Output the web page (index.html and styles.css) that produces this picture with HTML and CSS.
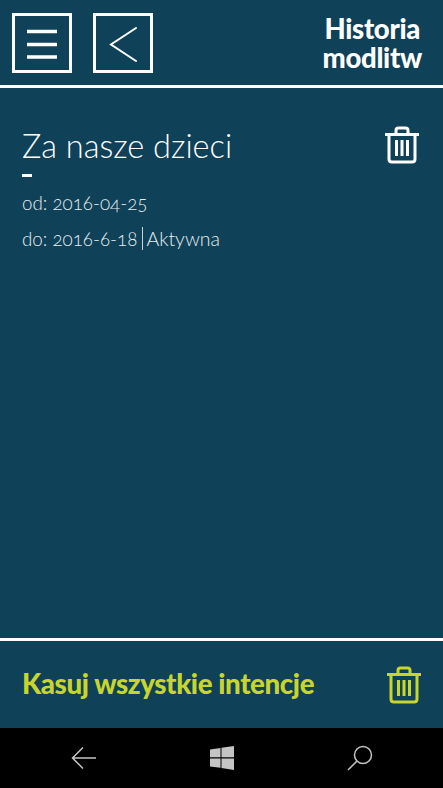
FILE: index.html
```html
<!DOCTYPE html>
<html lang="pl">
<head>
  <meta charset="UTF-8">
  <title>Historia modlitw</title>
  <link rel="stylesheet" href="styles.css">
</head>
<body>
  <div class="app">
    <header class="top-bar">
      <button class="square-btn">
        <svg width="54" height="54" viewBox="0 0 54 54"><path d="M12 15.500h30M12 28.500h30M12 41h30" stroke="#fff" stroke-width="3.500" fill="none"/></svg>
      </button>
      <button class="square-btn">
        <svg width="54" height="54" viewBox="0 0 54 54"><path d="M40 12 L15 28.500 L40 45" stroke="#fff" stroke-width="2" stroke-linecap="round" fill="none"/></svg>
      </button>
      <h1 class="page-title">Historia<br>modlitw</h1>
    </header>

    <main class="list">
      <div class="intention">
        <div class="intention-info">
          <h2 class="intention-name">Za nasze dzieci</h2>
          <div class="dash"></div>
          <p class="date-line">od: 2016-04-25</p>
          <p class="date-line">do: 2016-6-18 <span class="status">Aktywna</span></p>
        </div>
        <svg class="trash" width="36" height="38" viewBox="0 0 36 38" fill="none" stroke="#fff" stroke-width="3">
          <path d="M1 8.500h34M12 8V4.500q0-2.500 2.500-2.500h7q2.500 0 2.500 2.500V8M5 8.500V33q0 3 3 3h20q3 0 3-3V8.500M12.500 14v16M18 14v16M23.500 14v16"/>
        </svg>
      </div>
    </main>

    <footer class="bottom-bar">
      <span class="clear-all">Kasuj wszystkie intencje</span>
      <svg class="trash" width="36" height="38" viewBox="0 0 36 38" fill="none" stroke="#c8d62b" stroke-width="3">
        <path d="M1 8.500h34M12 8V4.500q0-2.500 2.500-2.500h7q2.500 0 2.500 2.500V8M5 8.500V33q0 3 3 3h20q3 0 3-3V8.500M12.500 14v16M18 14v16M23.500 14v16"/>
      </svg>
    </footer>

    <nav class="phone-nav">
      <svg width="26" height="24" viewBox="0 0 26 24" fill="none" stroke="#c4c4c4" stroke-width="1.500"><path d="M25 12H2M12 1.500 1.500 12 12 22.500"/></svg>
      <svg width="24" height="24" viewBox="0 0 24 24" fill="#c4c4c4"><path d="M0 3.500 10.500 2v9.200H0zM11.500 1.800 24 0v11.200H11.500zM0 12.400h10.500v9.400L0 20.400zM11.500 12.400H24V24l-12.500-1.900z"/></svg>
      <svg width="26" height="26" viewBox="0 0 26 26" fill="none" stroke="#c4c4c4" stroke-width="1.500"><circle cx="16" cy="10" r="8.500"/><path d="M10 16 1 25"/></svg>
    </nav>
  </div>
</body>
</html>
```
FILE: styles.css
```css
body {
    margin: 0;
    background-color: #0f4158;
    font-family: Lato, "Open Sans", sans-serif;
    color: white;
}

.app {
    display: flex;
    flex-direction: column;
    height: 788px;
    overflow: hidden;
}

.top-bar {
    display: flex;
    align-items: center;
    gap: 21px;
    height: 85px;
    padding: 0 21px 0 12px;
    border-bottom: 3px solid white;
    flex-shrink: 0;
}
.square-btn {
    width: 60px;
    height: 60px;
    padding: 0;
    border: 3px solid white;
    background: none;
}
.square-btn svg {
    display: block;
}
.page-title {
    margin: 0 0 0 auto;
    font-size: 27.500px;
    line-height: 29px;
    font-weight: 900;
    letter-spacing: -0.3px;
    text-align: center;
}

.list {
    flex: 1;
    padding: 37px 23px 0 22px;
}
.intention {
    display: flex;
    justify-content: space-between;
    align-items: flex-start;
    padding-top: 1px;
}
.intention-name {
    margin: 0;
    font-size: 32.500px;
    line-height: 40px;
    font-weight: 300;
}
.dash {
    width: 10px;
    height: 3px;
    margin: 8px 0 13px;
    background-color: white;
}
.date-line {
    margin: 0 0 11px;
    font-size: 18.800px;
    line-height: 25px;
    font-weight: 300;
    color: #e6eef1;
    font-feature-settings: "onum";
}
.status {
    margin-left: 0;
    padding-left: 3px;
    border-left: 1px solid #c9d3d8;
    font-size: 19.500px;
}
.trash {
    flex-shrink: 0;
}

.bottom-bar {
    display: flex;
    justify-content: space-between;
    align-items: center;
    height: 87px;
    padding: 0 21px 0 22px;
    border-top: 3px solid white;
    flex-shrink: 0;
}
.clear-all {
    padding-bottom: 3px;
    font-size: 27.700px;
    font-weight: 900;
    letter-spacing: -0.4px;
    color: #c8d62b;
}

.phone-nav {
    display: flex;
    justify-content: space-between;
    align-items: center;
    height: 60px;
    padding: 0 70px 0 71px;
    background-color: black;
    flex-shrink: 0;
}
```
